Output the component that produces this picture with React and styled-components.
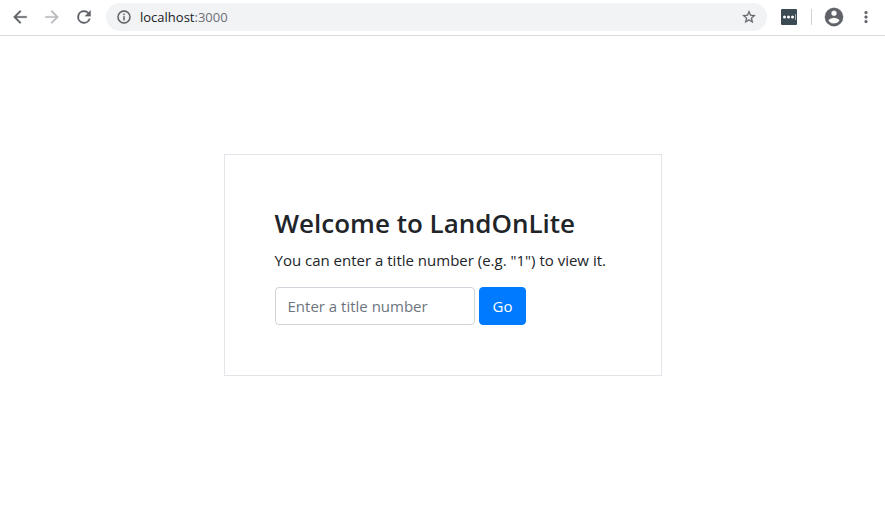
import React from "react";
import styled, { createGlobalStyle } from "styled-components";

const GlobalStyle = createGlobalStyle`
  *, *::before, *::after { box-sizing: border-box; }
  body {
    margin: 0;
    background: #fff;
    color: #212529;
    font-family: "Segoe UI", "Open Sans", "Noto Sans", sans-serif;
    font-size: 15px;
    line-height: 24px;
  }
`;

const Page = styled.div`
  display: flex;
  flex-direction: column;
  min-height: 100vh;
`;

const Toolbar = styled.header`
  display: flex;
  align-items: center;
  padding: 3px 3px 4px 4px;
  border-bottom: 1px solid #d9dbde;
`;

const IconButton = styled.button`
  display: flex;
  flex: none;
  align-items: center;
  justify-content: center;
  width: 32px;
  height: 28px;
  padding: 0;
  border: 0;
  background: none;
  color: ${(p) => (p.disabled ? "#babcbe" : "#5f6368")};
`;

const AddressBar = styled.div`
  display: flex;
  flex: 1;
  align-items: center;
  min-width: 0;
  height: 28px;
  margin: 0 6px;
  padding: 0 2px;
  border-radius: 14px;
  background: #f1f3f4;
`;

const Url = styled.span`
  flex: 1;
  color: #202124;
  font-size: 13px;
`;

const Port = styled.span`
  color: #6b6f74;
`;

const Separator = styled.span`
  width: 1px;
  height: 16px;
  margin: 0 6px;
  background: #cfd1d4;
`;

const Main = styled.main`
  display: flex;
  flex: 1;
  align-items: center;
  justify-content: center;
  padding-bottom: 38px;
`;

const Card = styled.section`
  width: 100%;
  max-width: 438px;
  padding: 50px;
  border: 1px solid #e1e4e8;
`;

const Title = styled.h1`
  margin: 0 0 8px;
  font-size: 26px;
  font-weight: 600;
  line-height: 36px;
`;

const Lead = styled.p`
  margin: 0 0 16px;
  line-height: 22px;
  white-space: nowrap;
`;

const Form = styled.form`
  display: flex;
  gap: 4px;
`;

const TextInput = styled.input`
  width: 200px;
  height: 38px;
  padding: 6px 12px;
  border: 1px solid #ced4da;
  border-radius: 4px;
  background: #fff;
  color: #495057;
  font: inherit;
  &::placeholder { color: #6c757d; opacity: 1; }
`;

const SubmitButton = styled.button`
  height: 38px;
  padding: 6px 13px;
  border: 1px solid #007bff;
  border-radius: 4px;
  background: #007bff;
  color: #fff;
  font: inherit;
`;

function Icon({ d, size }) {
  return (
    <svg width={size} height={size} viewBox="0 0 24 24" fill="currentColor" stroke="currentColor" strokeWidth="0.3" aria-hidden="true">
      <path d={d} />
    </svg>
  );
}

const paths = {
  back: "M20 11H7.83l5.59-5.59L12 4l-8 8 8 8 1.41-1.41L7.83 13H20v-2z",
  forward: "M12 4l-1.41 1.41L16.17 11H4v2h12.17l-5.58 5.59L12 20l8-8z",
  reload:
    "M17.65 6.35A7.96 7.96 0 0 0 12 4a8 8 0 1 0 7.73 10h-2.08A6 6 0 1 1 12 6c1.66 0 3.14.69 4.22 1.78L13 11h7V4l-2.35 2.35z",
  info: "M11 17h2v-6h-2v6zm1-15a10 10 0 1 0 0 20 10 10 0 0 0 0-20zm0 18a8 8 0 1 1 0-16 8 8 0 0 1 0 16zM11 9h2V7h-2v2z",
  star: "M22 9.24l-7.19-.62L12 2 9.19 8.63 2 9.24l5.46 4.73L5.82 21 12 17.27 18.18 21l-1.63-7.03L22 9.24zM12 15.4l-3.76 2.27 1-4.28-3.32-2.88 4.38-.38L12 6.1l1.71 4.04 4.38.38-3.32 2.88 1 4.28L12 15.4z",
  profile:
    "M12 2a10 10 0 1 0 0 20 10 10 0 0 0 0-20zm0 3a3 3 0 1 1 0 6 3 3 0 0 1 0-6zm0 14.2a7.2 7.2 0 0 1-6-3.22c.03-1.99 4-3.08 6-3.08s5.97 1.09 6 3.08a7.2 7.2 0 0 1-6 3.22z",
  menu: "M12 8a2 2 0 1 0 0-4 2 2 0 0 0 0 4zm0 2a2 2 0 1 0 0 4 2 2 0 0 0 0-4zm0 6a2 2 0 1 0 0 4 2 2 0 0 0 0-4z",
};

function PasswordIcon() {
  return (
    <svg width="16" height="16" viewBox="0 0 16 16" aria-hidden="true">
      <rect width="16" height="16" rx="1" fill="#3c4a54" />
      <circle cx="3.5" cy="8" r="1.5" fill="#fff" />
      <circle cx="7.5" cy="8" r="1.5" fill="#fff" />
      <circle cx="11.5" cy="8" r="1.5" fill="#fff" />
      <rect x="14" y="5" width="1" height="6" fill="#aab1b6" />
    </svg>
  );
}

export default function App() {
  return (
    <Page>
      <GlobalStyle />
      <Toolbar>
        <IconButton type="button" aria-label="Back"><Icon d={paths.back} size={20} /></IconButton>
        <IconButton type="button" aria-label="Forward" disabled><Icon d={paths.forward} size={20} /></IconButton>
        <IconButton type="button" aria-label="Reload"><Icon d={paths.reload} size={20} /></IconButton>
        <AddressBar>
          <IconButton type="button" aria-label="Site information"><Icon d={paths.info} size={16} /></IconButton>
          <Url>localhost<Port>:3000</Port></Url>
          <IconButton type="button" aria-label="Bookmark this page"><Icon d={paths.star} size={16} /></IconButton>
        </AddressBar>
        <IconButton type="button" aria-label="Password manager"><PasswordIcon /></IconButton>
        <Separator />
        <IconButton type="button" aria-label="Profile"><Icon d={paths.profile} size={22} /></IconButton>
        <IconButton type="button" aria-label="Menu"><Icon d={paths.menu} size={18} /></IconButton>
      </Toolbar>
      <Main>
        <Card>
          <Title>Welcome to LandOnLite</Title>
          <Lead>You can enter a title number (e.g. "1") to view it.</Lead>
          <Form onSubmit={(event) => event.preventDefault()}>
            <TextInput type="text" aria-label="Title number" placeholder="Enter a title number" />
            <SubmitButton type="submit">Go</SubmitButton>
          </Form>
        </Card>
      </Main>
    </Page>
  );
}
